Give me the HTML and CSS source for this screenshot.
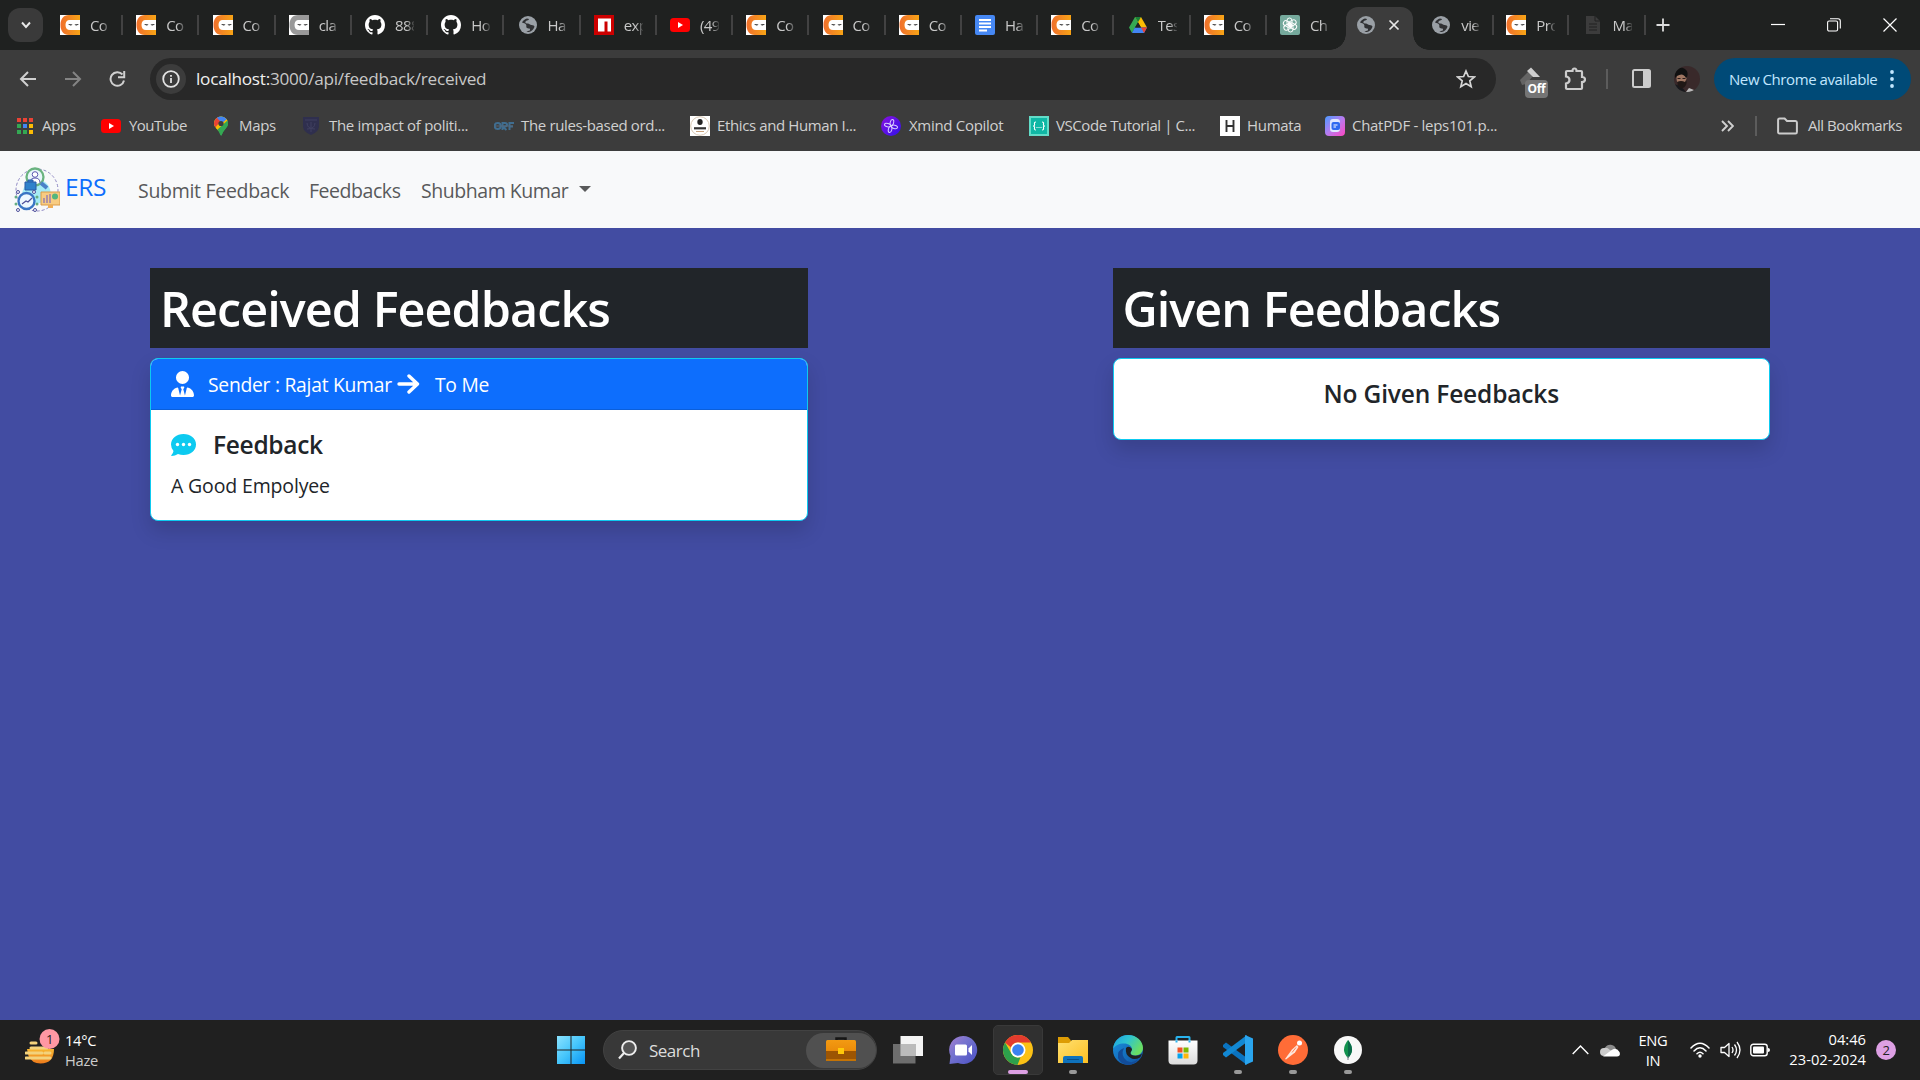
FILE: index.html
```html
<!DOCTYPE html>
<html lang="en">
<head>
<meta charset="utf-8">
<title>Received Feedbacks</title>
<link rel="stylesheet" href="styles.css">
</head>
<body>
<svg class="defs" width="0" height="0">
  <defs>
    <linearGradient id="gOrange" x1="0" x2="1" y1="0" y2="0"><stop offset="0" stop-color="#f06f2c"/><stop offset="1" stop-color="#f7a416"/></linearGradient>
    <linearGradient id="gWin" x1="0" x2="1" y1="0" y2="1"><stop offset="0" stop-color="#8be3ff"/><stop offset=".5" stop-color="#45c5fb"/><stop offset="1" stop-color="#0894f5"/></linearGradient>
    <linearGradient id="gCase" x1="0" x2="0" y1="0" y2="1"><stop offset="0" stop-color="#f39a12"/><stop offset="1" stop-color="#e27e02"/></linearGradient>
    <linearGradient id="gChat" x1="0" x2="1" y1="0" y2="1"><stop offset="0" stop-color="#a77fd0"/><stop offset=".4" stop-color="#7573cf"/><stop offset="1" stop-color="#4a50c4"/></linearGradient>
    <linearGradient id="gFolder" x1="0" x2="1" y1="0" y2="1"><stop offset="0" stop-color="#ffe071"/><stop offset="1" stop-color="#fcbf22"/></linearGradient>
    <linearGradient id="gEdgeTop" x1="0" x2="1" y1="0" y2=".5"><stop offset="0" stop-color="#1b9de2"/><stop offset=".5" stop-color="#2fc4cf"/><stop offset="1" stop-color="#6ade62"/></linearGradient>
    <linearGradient id="gEdgeLow" x1="0" x2="1" y1="0" y2="1"><stop offset="0" stop-color="#1a93e0"/><stop offset="1" stop-color="#0f4fa0"/></linearGradient>
    <linearGradient id="gStore" x1="0" x2="0" y1="0" y2="1"><stop offset="0" stop-color="#fff"/><stop offset="1" stop-color="#dcdcdc"/></linearGradient>
    <linearGradient id="gSun" x1="0" x2="0" y1="0" y2="1"><stop offset="0" stop-color="#f7b731"/><stop offset="1" stop-color="#ee7b1c"/></linearGradient>
    <linearGradient id="gXm" x1="0" x2="1" y1="0" y2="1"><stop offset="0" stop-color="#8a10e0"/><stop offset="1" stop-color="#2f12ea"/></linearGradient>
    <linearGradient id="gPdf" x1="0" x2="1" y1="0" y2="1"><stop offset="0" stop-color="#4a9bff"/><stop offset=".5" stop-color="#b77bf0"/><stop offset="1" stop-color="#ff46c0"/></linearGradient>
  </defs>
  <symbol id="cn" viewBox="0 0 20 20"><rect width="20" height="20" fill="#fff"/><path d="M20 0H9C3.500 0 .5 4 .5 10s3 10 8.500 10h11v-5H10c-3 0-4.500-2-4.500-5s1.500-5 4-5H20z" fill="url(#gOrange)"/><path d="M8 6h12v8H9c-2 0-3-2-3-4s.5-4 2-4z" fill="#fff"/><path d="M8 9q2.500 2.500 4.500.5zM19 9q-2.500 2.500-4.500.5z" fill="#222"/></symbol>
  <symbol id="cng" viewBox="0 0 20 20"><rect width="20" height="20" fill="#fff"/><path d="M20 0H9C3.500 0 .5 4 .5 10s3 10 8.500 10h11v-5H10c-3 0-4.500-2-4.500-5s1.500-5 4-5H20z" fill="#999"/><path d="M8 6h12v8H9c-2 0-3-2-3-4s.5-4 2-4z" fill="#fff"/><path d="M8 9q2.500 2.500 4.500.5zM19 9q-2.500 2.500-4.500.5z" fill="#222"/></symbol>
  <symbol id="gh" viewBox="0 0 16 16"><path fill="#fff" d="M8 0C3.580 0 0 3.580 0 8c0 3.540 2.290 6.530 5.470 7.590.4.070.55-.17.55-.38 0-.19-.01-.82-.01-1.490-2.010.37-2.530-.49-2.690-.94-.09-.23-.48-.94-.82-1.130-.28-.15-.68-.52-.01-.53.63-.01 1.080.58 1.230.82.72 1.210 1.870.87 2.330.66.070-.52.280-.87.510-1.070-1.780-.2-3.640-.89-3.640-3.950 0-.87.310-1.590.820-2.150-.08-.2-.36-1.020.08-2.120 0 0 .67-.21 2.200.82.64-.18 1.320-.27 2-.27s1.360.09 2 .27c1.530-1.040 2.200-.82 2.200-.82.44 1.100.16 1.920.08 2.120.51.56.82 1.270.82 2.150 0 3.070-1.870 3.750-3.650 3.950.29.25.54.73.54 1.480 0 1.070-.01 1.930-.01 2.200 0 .21.15.46.55.38A8.010 8.010 0 0 0 16 8c0-4.420-3.580-8-8-8z"/></symbol>
  <symbol id="globe" viewBox="0 0 20 20"><circle cx="10" cy="10" r="9" fill="#9aa0a6"/><path d="M9 3.500c-2 .5-4 2-5 4 2 1 3 .5 4 2s-.5 2.500 1 3.500 3-.5 3 1.500-2 1-3.500 2.500c4 .5 7-2 8-5.500-1-2-3-1-4.500-2s-1-1-3-1-2-1.500-1-2.500 3-.5 3-2z" fill="#303134"/></symbol>
  <symbol id="npm" viewBox="0 0 20 20"><rect width="20" height="20" fill="#c00"/><path d="M4 3.500h13v13h-3.500v-10h-3v10H4z" fill="#fff"/></symbol>
  <symbol id="yt" viewBox="0 0 20 20"><rect y="3" width="20" height="14" rx="3.500" fill="#f00"/><path d="M8 7v6l5-3z" fill="#fff"/></symbol>
  <symbol id="docs" viewBox="0 0 20 20"><rect width="20" height="20" rx="2" fill="#4688f4"/><path d="M4 5h12M4 8.500h12M4 12h12M4 15.500h8" stroke="#fff" stroke-width="1.800"/></symbol>
  <symbol id="drive" viewBox="0 0 20 20"><path d="M7 2h6L6.500 13.500 4 18 1 12.500z" fill="#34a853"/><path d="M13 2l6 10.500h-6L7 2z" fill="#fbbc04"/><path d="M7 2h6l-3 5.200z" fill="#188038"/><path d="M6.800 12.500H19L16 18H4z" fill="#4285f4"/><path d="M13 12.500h6L16 18z" fill="#ea4335"/><path d="M10 7.500l3 5H7z" fill="#202120"/></symbol>
  <symbol id="gpt" viewBox="0 0 20 20"><rect width="20" height="20" rx="2" fill="#75a99c"/><g fill="none" stroke="#fff" stroke-width="1"><rect x="7" y="3" width="5" height="8" rx="2.500"/><rect x="7" y="3" width="5" height="8" rx="2.500" transform="rotate(60 10 10)"/><rect x="7" y="3" width="5" height="8" rx="2.500" transform="rotate(120 10 10)"/><rect x="7" y="3" width="5" height="8" rx="2.500" transform="rotate(180 10 10)"/><rect x="7" y="3" width="5" height="8" rx="2.500" transform="rotate(240 10 10)"/><rect x="7" y="3" width="5" height="8" rx="2.500" transform="rotate(300 10 10)"/></g></symbol>
  <symbol id="doc" viewBox="0 0 20 20"><path d="M3 1h9l5 5v13H3z" fill="#3c3c3c"/><path d="M6 9h8M6 12h8M6 15h8M12 1v5h5" stroke="#202020" fill="none"/></symbol>
</svg>

<header class="chrome">
  <div class="tabstrip">
    <button class="tabsearch"><svg width="12" height="12" viewBox="0 0 12 12"><path d="M2 3.500l4 4.500 4-4.500" fill="none" stroke="#e8e8e8" stroke-width="1.900"/></svg></button>
    <div class="tabs">
      <div class="tab"><svg><use href="#cn"/></svg><span>Co</span></div>
      <div class="tab"><svg><use href="#cn"/></svg><span>Co</span></div>
      <div class="tab"><svg><use href="#cn"/></svg><span>Co</span></div>
      <div class="tab"><svg><use href="#cng"/></svg><span>cla</span></div>
      <div class="tab"><svg><use href="#gh"/></svg><span>888</span></div>
      <div class="tab"><svg><use href="#gh"/></svg><span>Ho</span></div>
      <div class="tab"><svg><use href="#globe"/></svg><span>Ha</span></div>
      <div class="tab"><svg><use href="#npm"/></svg><span>exp</span></div>
      <div class="tab"><svg><use href="#yt"/></svg><span>(49</span></div>
      <div class="tab"><svg><use href="#cn"/></svg><span>Co</span></div>
      <div class="tab"><svg><use href="#cn"/></svg><span>Co</span></div>
      <div class="tab"><svg><use href="#cn"/></svg><span>Co</span></div>
      <div class="tab"><svg><use href="#docs"/></svg><span>Ha</span></div>
      <div class="tab"><svg><use href="#cn"/></svg><span>Co</span></div>
      <div class="tab"><svg><use href="#drive"/></svg><span>Tes</span></div>
      <div class="tab"><svg><use href="#cn"/></svg><span>Co</span></div>
      <div class="tab last"><svg><use href="#gpt"/></svg><span>Ch</span></div>
      <div class="tab active"><svg><use href="#globe"/></svg><svg class="x" viewBox="0 0 12 12"><path d="M1.500 1.500l9 9M10.500 1.500l-9 9" stroke="#e8e8e8" stroke-width="1.700"/></svg></div>
      <div class="tab"><svg><use href="#globe"/></svg><span>vie</span></div>
      <div class="tab"><svg><use href="#cn"/></svg><span>Pro</span></div>
      <div class="tab"><svg><use href="#doc"/></svg><span>Ma</span></div>
    </div>
    <svg class="plus" width="14" height="14" viewBox="0 0 14 14"><path d="M7 .5v13M.5 7h13" stroke="#ddd" stroke-width="1.800"/></svg>
    <div class="winctl">
      <svg width="14" height="14" viewBox="0 0 14 14"><path d="M0 6.500h14" stroke="#fff" stroke-width="1.200"/></svg>
      <svg width="14" height="14" viewBox="0 0 14 14"><rect x=".6" y="3" width="10" height="10" rx="1.500" fill="none" stroke="#fff" stroke-width="1.100"/><path d="M3 .7h8q2.300 0 2.300 2.300v7.500" fill="none" stroke="#fff" stroke-width="1.100"/></svg>
      <svg width="14" height="14" viewBox="0 0 14 14"><path d="M.5.5l13 13M13.500.5l-13 13" stroke="#fff" stroke-width="1.200"/></svg>
    </div>
  </div>

  <div class="toolbar">
    <svg class="nav" viewBox="0 0 18 18"><path d="M17 9H2M9 2L2 9l7 7" fill="none" stroke="#d0d0d0" stroke-width="2"/></svg>
    <svg class="nav" viewBox="0 0 18 18"><path d="M1 9h15M9 2l7 7-7 7" fill="none" stroke="#848484" stroke-width="2"/></svg>
    <svg class="nav" viewBox="0 0 18 18"><path d="M15 10.500A6.800 6.800 0 1 1 13.500 4.500" fill="none" stroke="#d0d0d0" stroke-width="2"/><path d="M15.200 1v6.300H9" fill="none" stroke="#d0d0d0" stroke-width="2"/></svg>
    <div class="omnibox">
      <span class="info"><svg width="18" height="18" viewBox="0 0 18 18"><circle cx="9" cy="9" r="7.800" fill="none" stroke="#e3e3e3" stroke-width="1.800"/><path d="M9 8v5M9 5v1.800" stroke="#e3e3e3" stroke-width="1.800"/></svg></span>
      <span class="url"><b>localhost:</b>3000/api/feedback/received</span>
      <svg class="star" width="20" height="20" viewBox="0 0 20 20"><path d="M10 2l2.400 5.500 5.900.5-4.500 3.900 1.400 5.900-5.200-3.200-5.200 3.200 1.400-5.900L1.700 8l5.900-.5z" fill="none" stroke="#d5d5d5" stroke-width="1.700"/></svg>
    </div>
    <div class="ext"><svg width="30" height="36" viewBox="0 0 30 36"><path d="M0 15l9-9 5 4-8 9-4 1z" fill="#646464"/><path d="M7 6l4-3.500 9 9.500h-7z" fill="#ccc"/></svg><span class="off">Off</span></div>
    <svg class="puzzle" width="22" height="24" viewBox="0 0 22 24"><path d="M3 4h5.500q0-2.500 2-2.500T12.500 4H17q1 0 1 1v5q3 0 3 2.500T18 15v6q0 1-1 1H3q-1 0-1-1v-4.500q3.500-.5 3.500-3.500T2 9.500V5q0-1 1-1z" fill="none" stroke="#ccc" stroke-width="2.200"/></svg>
    <i class="bar"></i>
    <svg class="side" width="19" height="19" viewBox="0 0 19 19"><rect x="1" y="1" width="17" height="17" rx="1.500" fill="none" stroke="#ccc" stroke-width="2"/><path d="M11 1h7v17h-7z" fill="#ccc"/></svg>
    <svg class="avatar" width="26" height="26" viewBox="0 0 26 26"><clipPath id="av"><circle cx="13" cy="13" r="13"/></clipPath><g clip-path="url(#av)"><path d="M0 0h26v26H0z" fill="#39292a"/><path d="M0 18q8 2 12 8H0z" fill="#17191d"/><ellipse cx="7.500" cy="12.500" rx="5" ry="7.500" fill="#a07763"/><path d="M1 12C0 3 6 1 9 2s6 4 4 9l-1 1Q9 6 3 10z" fill="#111"/><path d="M3 16q4-2 8 0l1.500-3q1 8-4.500 9.500-4 0-5-6.500z" fill="#201816"/><path d="M3.500 12.500h3M8.500 12.500h3" stroke="#2a1c18"/><path d="M12 26l3-4 5 2-2 3z" fill="#b9b9b9"/></g></svg>
    <div class="update"><span>New Chrome available</span><svg width="4" height="18" viewBox="0 0 4 18" fill="#c2e7ff"><circle cx="2" cy="2" r="1.900"/><circle cx="2" cy="9" r="1.900"/><circle cx="2" cy="16" r="1.900"/></svg></div>
  </div>

  <div class="bookmarks">
    <div class="bm apps"><svg width="16" height="16" viewBox="0 0 16 16"><path d="M0 0h4v4H0zM6 0h4v4H6zM12 0h4v4h-4z" fill="#ea4335"/><path d="M0 6h4v4H0zM0 12h4v4H0zM6 12h4v4H6z" fill="#34a853"/><path d="M6 6h4v4H6z" fill="#4285f4"/><path d="M12 6h4v4h-4zM12 12h4v4h-4z" fill="#fbbc04"/></svg><span>Apps</span></div>
    <div class="bm youtube"><svg><use href="#yt"/></svg><span>YouTube</span></div>
    <div class="bm maps"><svg viewBox="0 0 20 20"><clipPath id="pin"><path d="M10 .5a7 7 0 0 1 7 7c0 4-4 5.500-6 11q-.8 2-1.800 0C7.500 13 3 11.500 3 7.500a7 7 0 0 1 7-7z"/></clipPath><g clip-path="url(#pin)"><path d="M0 0h20v20H0z" fill="#34a853"/><path d="M0 0h20L10 8 3 16H0z" fill="#fbbc04"/><path d="M0 0h9v6l-6 7z" fill="#ea4335"/><path d="M4 0h14v3l-6 5z" fill="#4285f4"/><path d="M17 2v3l-7 8-4 3-3-3 6-4z" fill="#fbbc04"/><path d="M18 3v7l-8 11-4-7z" fill="#34a853"/></g><circle cx="10" cy="7.500" r="2.600" fill="#3c3c3c"/></svg><span>Maps</span></div>
    <div class="bm shield"><svg viewBox="0 0 20 20"><path d="M2 1h16v9q0 6-8 9-8-3-8-9z" fill="#2f2f4e"/><path d="M4 4h12M10 6v10M6 7q0 6 8 6M14 7q0 6-8 6" stroke="#404060" fill="none"/></svg><span>The impact of politi...</span></div>
    <div class="bm orf"><svg viewBox="0 0 20 20"><g fill="none" stroke="#3f6d90" stroke-width="2"><circle cx="3.700" cy="10" r="3"/><path d="M8.500 14V7h2.500q2 0 2 1.700T11 10.500H8.500l4 3.500M15.500 14V7H20M15.500 10.500H19"/></g><path d="M1 10h18" stroke="#56687a"/></svg><span>The rules-based ord...</span></div>
    <div class="bm ethics"><svg viewBox="0 0 20 20"><path d="M0 0h20v20H0z" fill="#fff"/><circle cx="10" cy="10" r="9.300" fill="#fff" stroke="#d8c7b2"/><ellipse cx="10" cy="6" rx="2.700" ry="3" fill="#222"/><path d="M4 12.300h12" stroke="#333" stroke-width="2.200"/><path d="M6 15.500h8" stroke="#c9a27c"/></svg><span>Ethics and Human I...</span></div>
    <div class="bm xmind"><svg viewBox="0 0 20 20"><circle cx="10" cy="10" r="10" fill="url(#gXm)"/><g fill="none" stroke="#d9ccff" stroke-width="1"><ellipse cx="10" cy="6.500" rx="1.700" ry="3.200" transform="rotate(15 10 10)"/><ellipse cx="10" cy="6.500" rx="1.700" ry="3.200" transform="rotate(105 10 10)"/><ellipse cx="10" cy="6.500" rx="1.700" ry="3.200" transform="rotate(195 10 10)"/><ellipse cx="10" cy="6.500" rx="1.700" ry="3.200" transform="rotate(285 10 10)"/></g></svg><span>Xmind Copilot</span></div>
    <div class="bm vsc"><svg viewBox="0 0 20 20"><path d="M0 0h20v20H0z" fill="#62dcc8"/><path d="M2 2h16v16H2z" fill="#10b7a5"/><path d="M7 6q-2 0-1.500 2T4 10q2 0 1.500 2T7 14M13 6q2 0 1.500 2t1.500 2q-2 0-1.500 2T13 14" fill="none" stroke="#fff" stroke-width="1.100"/><path d="M7.500 11.500h5" stroke="#fff" stroke-dasharray="1 1"/></svg><span>VSCode Tutorial | C...</span></div>
    <div class="bm humata"><svg viewBox="0 0 20 20"><path d="M0 0h20v20H0z" fill="#fff"/><path d="M6.500 4v12M13.500 4v12M6.500 10h7" stroke="#333" stroke-width="1.900"/></svg><span>Humata</span></div>
    <div class="bm pdf"><svg viewBox="0 0 20 20"><rect width="20" height="20" rx="4" fill="url(#gPdf)"/><rect x="5" y="3" width="10" height="13" rx="3" fill="#dfe8ff"/><rect x="6.500" y="6" width="8.500" height="8" rx="2" fill="#2f6af0"/><path d="M8.500 9h4M8.500 11h2.500" stroke="#fff"/></svg><span>ChatPDF - leps101.p...</span></div>
    <svg class="more" width="13" height="12" viewBox="0 0 13 12"><path d="M1 1l5 5-5 5M7 1l5 5-5 5" fill="none" stroke="#d0d0d0" stroke-width="1.900"/></svg>
    <i class="bar"></i>
    <div class="bm all"><svg width="21" height="18" viewBox="0 0 21 18"><path d="M1.100 15V3q0-1.500 1.500-1.500h5L10 4h8.500q1.400 0 1.400 1.500V15q0 1.500-1.400 1.500h-16Q1.100 16.500 1.100 15z" fill="none" stroke="#ccc" stroke-width="2"/></svg><span>All Bookmarks</span></div>
  </div>
</header>

<nav class="navbar">
  <svg class="logo" width="46" height="46" viewBox="0 0 46 46"><circle cx="23" cy="23" r="21" fill="none" stroke="#8f88c4" stroke-dasharray="3 2"/><path d="M8 27Q10 14 23 12q14 2 14 18-12 10-24 5z" fill="#a5ebf5"/><circle cx="21" cy="10" r="8.500" fill="#e8f6fb" stroke="#6ab380" stroke-width="2.300"/><circle cx="21" cy="7.500" r="2.800" fill="#fff" stroke="#5b58b0"/><path d="M16 16q0-5 5-5t5 5" fill="#fff" stroke="#5b58b0"/><path d="M27 16l6 5" stroke="#4a80c8" stroke-width="4"/><path d="M11 15h11v8H11zM14 15v-2h5v2" fill="#2f82cb" stroke="#2a5aa8"/><path d="M27 25h19v13H27z" fill="#f8cc82" stroke="#d89b4b"/><path d="M30 36v-5M33 36v-8M36 36V27" stroke="#8c76b5" stroke-width="1.300"/><circle cx="41" cy="29.500" r="3" fill="#53b67d"/><path d="M34 38h5v3h-5z" fill="#f0ae56"/><circle cx="12.500" cy="34" r="8" fill="#edf8ff" stroke="#3975c4" stroke-width="2.300"/><path d="M8 37l4-3 2 1 4-4" fill="none" stroke="#4d4f9a" stroke-width="1.200"/><g fill="#fff" stroke="#4d4f9a"><circle cx="4" cy="25" r="1.500"/><circle cx="20" cy="25" r="1.500"/><circle cx="4" cy="43" r="1.500"/><circle cx="21" cy="43" r="1.500"/></g><g fill="#65ad83"><circle cx="2" cy="30" r="1.500"/><circle cx="2" cy="37" r="1.500"/><circle cx="23" cy="30" r="1.500"/><circle cx="23" cy="37" r="1.500"/></g></svg>
  <a class="brand">ERS</a>
  <a class="link submit">Submit Feedback</a>
  <a class="link feedbacks">Feedbacks</a>
  <a class="link user">Shubham Kumar</a>
  <i class="caret"></i>
</nav>

<main class="page">
  <section class="col">
    <h1>Received Feedbacks</h1>
    <article class="card">
      <div class="card-header">
        <svg width="23" height="26" viewBox="0 0 448 512" preserveAspectRatio="none"><path fill="#fff" d="M224 256a128 128 0 1 0 0-256 128 128 0 1 0 0 256zM209 359l-18-30c-7-11 1-25 13-25h40c12 0 20 14 13 25l-18 30 33 123 36-146c2-8 10-14 18-11C396 342 448 406 448 482c0 17-14 30-30 30H30c-17 0-30-14-30-30 0-76 52-140 122-157 8-3 16 3 18 11l36 146z"/></svg>
        <span class="from">Sender : Rajat Kumar</span>
        <svg class="arrow" width="23" height="20" viewBox="0 0 23 20"><path d="M2 10h18M12 2l8.500 8L12 18" fill="none" stroke="#fff" stroke-width="3.400" stroke-linecap="round" stroke-linejoin="round"/></svg>
        <span class="to">To Me</span>
      </div>
      <div class="card-body">
        <h5><svg width="25" height="24" viewBox="0 0 25 24"><path d="M12.500 1C19.500 1 25 5.500 25 11.500S19.500 22 12.500 22q-3 0-5.500-1-3 2-6.500 2-.6-.4 0-1 1.500-1.500 2-4Q0 15 0 11.500C0 5.500 5.500 1 12.500 1z" fill="#0dcaf0"/><g fill="#fff"><circle cx="6.500" cy="11.500" r="1.700"/><circle cx="12.500" cy="11.500" r="1.700"/><circle cx="18.500" cy="11.500" r="1.700"/></g></svg><span>Feedback</span></h5>
        <p>A Good Empolyee</p>
      </div>
    </article>
  </section>
  <section class="col">
    <h1>Given Feedbacks</h1>
    <article class="card">
      <div class="card-body empty"><h5>No Given Feedbacks</h5></div>
    </article>
  </section>
</main>

<footer class="taskbar">
  <div class="weather">
    <svg width="35" height="38" viewBox="0 0 35 38"><path d="M2 20h27q0 14.500-13.500 14.500Q7 34.500 3.500 27z" fill="url(#gSun)"/><path d="M6 14h5M6 19h16M1 24h16M20 24h5M1 29h24" stroke="#f3d27c" stroke-width="3" stroke-linecap="round"/><circle cx="24.500" cy="10" r="10" fill="#ff97a3"/><text x="24.500" y="15" text-anchor="middle" font-size="13" fill="#222">1</text></svg>
    <div class="two"><span class="bright">14°C</span><span>Haze</span></div>
  </div>
  <div class="dock">
    <svg class="win" width="30" height="30" viewBox="0 0 30 30"><path d="M1 1h13.500v13.500H1zM15.500 1H29v13.500H15.500zM1 15.500h13.500V29H1zM15.500 15.500H29V29H15.500z" fill="url(#gWin)"/></svg>
    <div class="search">
      <svg width="19" height="20" viewBox="0 0 19 20"><circle cx="11" cy="8" r="6.900" fill="#555" stroke="#eee" stroke-width="1.900"/><path d="M6 13l-5 5.500" stroke="#eee" stroke-width="2.200"/></svg>
      <span>Search</span>
      <div class="hl"><svg width="30" height="26" viewBox="0 0 30 26"><path d="M10.500 3.500V1.500h9v2" fill="none" stroke="#161616" stroke-width="2.500"/><rect y="3" width="30" height="21" rx="1.500" fill="url(#gCase)"/><path d="M0 14h30v8H0z" fill="#9c5503"/><path d="M0 22h30v2H0z" fill="#c47305"/><path d="M12 11h6v6h-6z" fill="#ffc90a"/></svg></div>
    </div>
    <div class="app"><svg viewBox="0 0 30 30"><path d="M7.500 1H30v20H7.500z" fill="#f4f4f4"/><path d="M0 9h22.500v19.500H0z" fill="#777" opacity=".9"/><path d="M7.500 9h15v12h-15z" fill="#bbb"/></svg></div>
    <div class="app"><svg viewBox="0 0 30 30"><path d="M15 1a14 14 0 1 1-5 27L1.500 29l1-8A14 14 0 0 1 15 1z" fill="url(#gChat)"/><rect x="7" y="9.500" width="12" height="11" rx="1.500" fill="#fff"/><path d="M20.500 13.500L24 10v10l-3.500-3.500z" fill="#fff"/></svg></div>
    <div class="app on"><svg viewBox="0 0 30 30"><circle cx="15" cy="15" r="15" fill="#fbc116"/><path d="M2 7.500A15 15 0 0 1 28 7.500H15a7.500 7.500 0 0 0-7 5z" fill="#e33b2e"/><path d="M2 7.500L8.500 18.700a7.500 7.500 0 0 0 9 3.500L14.500 30A15 15 0 0 1 2 7.500z" fill="#2da04c"/><circle cx="15" cy="15" r="7.500" fill="#fff"/><circle cx="15" cy="15" r="5.800" fill="#3b82f0"/></svg></div>
    <div class="app run"><svg viewBox="0 0 30 30"><path d="M0 2h10l3 3.500V10H0z" fill="#dd9c05"/><path d="M0 8h11l3-3h16v23H0z" fill="url(#gFolder)"/><path d="M5 28v-5q0-2 2-2h16q2 0 2 2v5z" fill="#0f72bc"/><path d="M9 24.500h12" stroke="#094f8a"/></svg></div>
    <div class="app"><svg viewBox="0 0 30 30"><circle cx="15" cy="15" r="15" fill="url(#gEdgeLow)"/><path d="M0 14C1 5 8 0 15 0c9 0 15 6.500 15 13 0 5-4 7.500-8 7.500-3 0-4.500-1.300-4.500-2.500s1.500-2 1.500-4c0-3-3.500-5.500-8-5.500C6 8.500 2 10.500 0 14z" fill="url(#gEdgeTop)"/><path d="M11 13q-4 8 3 13 6 3 11-2-2 5-9 6-8 0-11-7-1-8 6-10z" fill="#124c99"/><path d="M13 13q3-3 6 1c0 2-1.500 2.800-1.500 4 0 3.500 8 3.500 11.500.5q-1 3-2 4-6 3-10 0-5-3-4-9.500z" fill="#202020"/></svg></div>
    <div class="app"><svg viewBox="0 0 30 30"><path d="M8.500 7V2.500Q8.500 2 9 2h12q.5 0 .5.500V7" fill="none" stroke="#29b3ee" stroke-width="2"/><path d="M.5 5.500h29v20q0 4-4 4h-21q-4 0-4-4z" fill="url(#gStore)"/><path d="M8.500 5.500v2M21.500 5.500v2" stroke="#29b3ee" stroke-width="2"/><path d="M9.500 12.500h5v5h-5z" fill="#ef5226"/><path d="M15.500 12.500h5v5h-5z" fill="#7db900"/><path d="M9.500 18.500h5v5h-5z" fill="#05a3ed"/><path d="M15.500 18.500h5v5h-5z" fill="#fdb70c"/></svg></div>
    <div class="app run"><svg viewBox="0 0 30 30"><path d="M0 10l3-2.500L24 23v7L0 12z" fill="#0a73c0"/><path d="M0 20l3 2.500L24 7V0L0 18z" fill="#1288d3"/><path d="M22 0l8 3.500v23L22 30z" fill="#2aa5ee"/></svg></div>
    <div class="app run"><svg viewBox="0 0 30 30"><circle cx="15" cy="15" r="15" fill="#ff6c37"/><circle cx="21.500" cy="8" r="2.500" fill="#fff"/><path d="M19 10l-5 4.500-7 9.500 1 .5 9-7 3.500-5.500z" fill="#ffe6dc"/><path d="M18 12.500l-4 5" stroke="#ff6c37" stroke-width=".8"/></svg></div>
    <div class="app run"><svg viewBox="0 0 30 30"><circle cx="15" cy="15" r="14" fill="#f8f8f8"/><path d="M15 5q8 10 0 18-8-8 0-18z" fill="#12934f"/><path d="M15 5q8 10 0 18z" fill="#0b6b4a"/><path d="M15 21v4" stroke="#778"/></svg></div>
  </div>
  <div class="tray">
    <svg class="up" width="17" height="10" viewBox="0 0 17 10"><path d="M.7 9l7.800-8 7.800 8" fill="none" stroke="#fff" stroke-width="1.400"/></svg>
    <svg class="cloud" width="20" height="14" viewBox="0 0 20 14"><path d="M5 5a6 6 0 0 1 11 1l-4 4-8-2z" fill="#8c8c8c"/><path d="M4 13a4 4 0 0 1 0-8q3-1 6 2l8 5z" fill="#ccc"/><path d="M3 13.500l8-6q5-4 8.500 1.500Q21 13 17 13.500z" fill="#fff"/></svg>
    <div class="two lang"><span>ENG</span><span>IN</span></div>
    <svg class="wifi" width="20" height="16" viewBox="0 0 20 16"><path d="M1 6q9-9.500 18 0M4 9q6-6.500 12 0M7 11.800q3-3 6 0" fill="none" stroke="#fff" stroke-width="1.500" stroke-linecap="round"/><circle cx="10" cy="14" r="1.700" fill="#fff"/></svg>
    <svg class="vol" width="21" height="18" viewBox="0 0 21 18"><path d="M1 6.500h3.500L9 2.500v13l-4.500-4H1zM12 6q2 3 0 6M14.500 3.500q4 5.500 0 11M17 1q6 8 0 16" fill="none" stroke="#fff" stroke-width="1.300" stroke-linejoin="round"/></svg>
    <svg class="bat" width="20" height="14" viewBox="0 0 20 14"><rect x=".8" y="1.200" width="16.400" height="11.600" rx="2.500" fill="none" stroke="#fff" stroke-width="1.400"/><rect x="3" y="3.500" width="11" height="7" rx="1" fill="#fff"/><path d="M18 5q2 0 2 2t-2 2z" fill="#fff"/></svg>
    <div class="two time"><span>04:46</span><span>23-02-2024</span></div>
    <span class="badge">2</span>
  </div>
</footer>
</body>
</html>
```
FILE: styles.css
```css
* { box-sizing: border-box; }
body {
  margin: 0;
  width: 1920px;
  height: 1080px;
  overflow: hidden;
  display: flex;
  flex-direction: column;
  font-family: "Open Sans", "Noto Sans", sans-serif;
  background: #424ca2;
}
svg { flex: none; display: block; }
.defs { position: absolute; }
h1, h5, p { margin: 0; }

/* Browser window */
.chrome { height: 151px; background: #3c3c3c; color: #d0d0d0; font-size: 15px; letter-spacing: -.3px; white-space: nowrap; flex: none; }
.tabstrip { height: 50px; background: #1f2120; display: flex; align-items: center; padding-left: 8px; }
.tabsearch { width: 35px; height: 34px; margin: 0 17px 0 0; padding: 0; border: 0; border-radius: 12px; background: #3a3a3a; display: flex; align-items: center; justify-content: center; }
.tabs { display: flex; height: 50px; }
.tab { width: 76.25px; display: flex; align-items: center; position: relative; }
.tab svg { width: 20px; height: 20px; }
.tab span { width: 19px; margin-left: 10px; overflow: hidden; line-height: 24px; letter-spacing: -.6px; color: #c8c8c8; -webkit-mask-image: linear-gradient(90deg, #000 60%, transparent 108%); mask-image: linear-gradient(90deg, #000 60%, transparent 108%); }
.tab::after { content: ""; width: 2px; height: 20px; background: #424242; margin-left: 12px; }
.tab.last::after { display: none; }
.tab.active, .tab.active + .tab { width: 75px; }
.tab.active { isolation: isolate; }
.tab.active svg.x { width: 12px; height: 12px; margin-left: 12px; }
.tab.active::before {
  content: "";
  position: absolute;
  z-index: -2;
  left: -26px; top: 7px;
  width: 99px; height: 43px;
  background:
    radial-gradient(circle at 0 0, transparent 15.500px, #3c3c3c 16px) 0 100% / 16px 16px no-repeat,
    radial-gradient(circle at 100% 0, transparent 15.500px, #3c3c3c 16px) 100% 100% / 16px 16px no-repeat;
}
.tab.active::after { position: absolute; z-index: -1; left: -10px; top: 7px; width: 67px; height: 43px; margin: 0; border-radius: 12px 12px 0 0; background: #3c3c3c; }
.plus { margin-left: -3px; }
.winctl { display: flex; gap: 42px; margin-left: auto; padding-right: 23px; }

.toolbar { height: 57px; display: flex; align-items: center; padding-left: 19px; }
.nav { width: 18px; height: 18px; margin-right: 27px; }
.omnibox { width: 1346px; height: 42px; margin-left: -4px; border-radius: 21px; background: #282828; display: flex; align-items: center; padding: 0 20px 0 6px; }
.info { width: 30px; height: 30px; border-radius: 15px; background: #3c3c3c; display: flex; align-items: center; justify-content: center; margin-right: 10px; }
.url { font-size: 17.200px; letter-spacing: -.26px; color: #c7c7c7; }
.url b { font-weight: 400; color: #f0f0f0; }
.star { margin-left: auto; }
.ext { position: relative; width: 30px; height: 26px; margin: 4px 0 0 24px; }
.ext svg { margin-top: -3px; }
.off { position: absolute; left: 5px; top: 12px; width: 23px; height: 18px; border-radius: 4px; background: #757575; color: #fff; font-size: 12px; font-weight: 700; line-height: 18px; text-align: center; }
.puzzle { margin-left: 14px; }
.bar { width: 2px; height: 20px; background: #5c5c5c; }
.toolbar .bar { margin-left: 20px; }
.side { margin-left: 24px; }
.avatar { margin-left: 23px; }
.update { width: 197px; height: 42px; margin-left: 14px; border-radius: 21px; background: #004a77; color: #c2e7ff; display: flex; align-items: center; justify-content: space-between; padding: 0 17px 0 15px; letter-spacing: -.42px; }

.bookmarks { height: 37px; display: flex; align-items: center; padding-left: 17px; }
.bm { display: flex; align-items: center; gap: 8px; }
.bm svg { width: 20px; height: 20px; }
.bm span { line-height: 24px; margin-top: -1px; }
.bm.apps { width: 84px; }
.bm.apps svg { width: 16px; height: 16px; margin-right: 1px; }
.bm.youtube { width: 110px; letter-spacing: -.55px; }
.bm.maps { width: 90px; }
.bm.shield { width: 193px; }
.bm.orf { width: 196px; gap: 7px; letter-spacing: -.35px; }
.bm.ethics { width: 191px; gap: 7px; letter-spacing: -.38px; }
.bm.xmind { width: 148px; gap: 8px; }
.bm.vsc { width: 191px; gap: 7px; letter-spacing: -.42px; }
.bm.humata { width: 105px; gap: 7px; }
.bm.pdf { width: 396px; gap: 7px; }
.bookmarks .bar { margin: 0 20px 0 21px; }
.bm.all { gap: 10px; letter-spacing: -.46px; }
.bm.all svg { width: 21px; height: 18px; }

/* Site navigation */
.navbar { height: 77px; flex: none; background: #f8f9fa; display: flex; align-items: center; padding-left: 14px; }
.brand { width: 73px; margin: -6px 0 0 5px; color: #0d6efd; font-size: 24.500px; font-weight: 500; letter-spacing: -.4px; line-height: 36px; }
.link { color: #595a5b; font-size: 19.500px; letter-spacing: -.45px; line-height: 30px; margin-top: 3px; }
.submit { width: 171px; letter-spacing: -.3px; }
.feedbacks { width: 112px; }
.user { width: 158px; }
.caret { border: 6px solid transparent; border-top-color: #595a5b; border-bottom: 0; margin-top: -2px; }

/* Feedback columns */
.page { flex: 1; display: flex; justify-content: space-between; align-items: flex-start; padding: 40px 150px; }
.col { width: 657.500px; display: flex; flex-direction: column; gap: 10px; }
h1 { height: 80px; line-height: 80px; padding-left: 10px; background: #212529; color: #fff; font-size: 48.500px; font-weight: 600; letter-spacing: -.940px; white-space: nowrap; }
.card { border: 1px solid #0dcaf0; border-radius: 8px; overflow: hidden; background: #fff; color: #212529; box-shadow: 0 10px 20px rgba(0, 0, 0, .15); }
.card-header { height: 51px; padding-left: 20px; background: #0d6efd; border-bottom: 1px solid #0b5fda; color: #fff; display: flex; align-items: center; font-size: 19.300px; font-weight: 500; letter-spacing: -.26px; }
.from { margin-left: 14px; width: 184px; white-space: nowrap; }
.arrow { margin-left: 5px; }
.to { margin-left: 15px; }
.card-body { padding: 20px; }
h5 { display: flex; align-items: center; height: 30px; margin-bottom: 10px; font-size: 24.500px; font-weight: 540; letter-spacing: -.3px; line-height: 32px; }
h5 span { margin-left: 17px; }
.card-body p { height: 30px; font-size: 19.500px; line-height: 32px; letter-spacing: -.15px; }
.empty h5 { justify-content: center; letter-spacing: -.17px; }

/* Taskbar */
.taskbar { height: 60px; flex: none; background: #202020; color: #fff; display: flex; align-items: center; font-size: 14.700px; letter-spacing: -.3px; padding: 0 24px 0 25px; }
.two { display: flex; flex-direction: column; line-height: 20px; }
.weather { width: 531px; display: flex; align-items: center; gap: 5px; color: #ccc; }
.weather svg { margin-top: -4px; }
.bright { color: #fff; }
.dock { display: flex; align-items: center; }
.search { width: 274px; height: 40px; margin: 0 6px 0 17px; border-radius: 20px; background: #383838; border: 1px solid #424242; display: flex; align-items: center; padding-left: 14px; font-size: 17px; letter-spacing: -.5px; color: #ddd; }
.search span { margin: 0 auto 0 12px; }
.hl { width: 70px; height: 35px; border-radius: 18px; background: #505050; display: flex; align-items: center; justify-content: center; }
.app { width: 50px; height: 50px; margin-right: 5px; display: flex; align-items: center; justify-content: center; position: relative; border-radius: 5px; }
.app svg { width: 30px; height: 30px; }
.app.on { background: #303030; border: 1px solid #393939; }
.app.run::after, .app.on::after { content: ""; position: absolute; bottom: 1px; left: 21px; width: 8px; height: 4px; border-radius: 2px; background: #999; }
.app.on::after { width: 20px; left: 14px; bottom: 0; background: #dda0e4; }
.tray { margin-left: auto; display: flex; align-items: center; }
.cloud { margin-left: 11px; }
.lang { width: 28px; margin: 0 23px 0 19px; align-items: center; }
.vol { margin: 0 9px 0 10px; }
.time { width: 96px; align-items: flex-end; margin-top: -2px; letter-spacing: 0; }
.badge { width: 20px; height: 20px; margin-left: 10px; border-radius: 10px; background: #dda0e4; color: #222; font-size: 13px; line-height: 20px; text-align: center; }
```
